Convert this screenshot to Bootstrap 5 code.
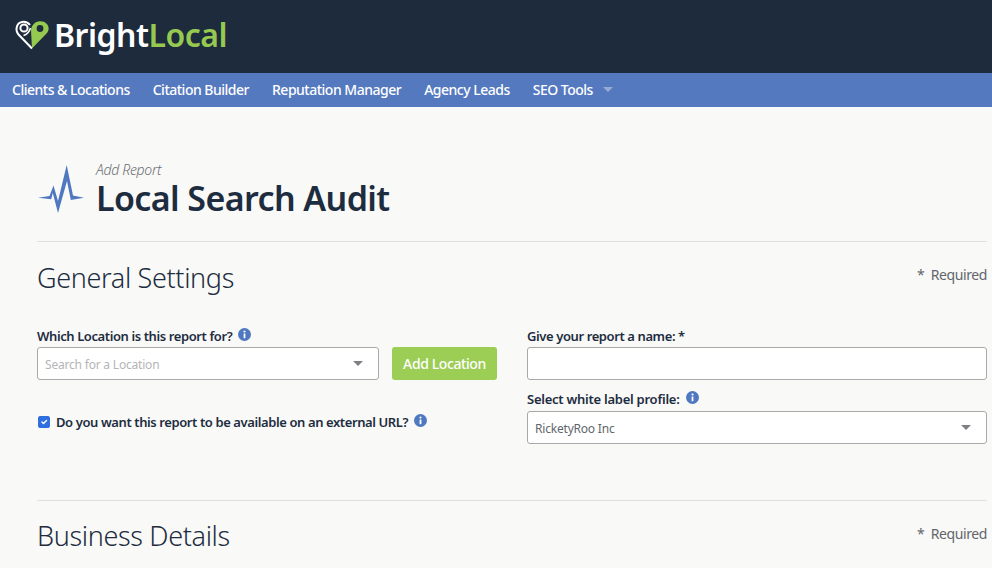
<!DOCTYPE html>
<html lang="en">
<head>
<meta charset="utf-8">
<title>Local Search Audit</title>
<link href="https://cdn.jsdelivr.net/npm/bootstrap@5.3.0/dist/css/bootstrap.min.css" rel="stylesheet">
<style>
html,body{height:568px;overflow:hidden}
body{background:#f9f9f8;color:#1d2d3f;font-family:"Noto Sans","Open Sans",sans-serif}
.top-bar{height:73px;background:#1d2b3d;padding:0 14px}
.logo-text{font-size:32px;font-weight:600;letter-spacing:-.5px;color:#fff;line-height:1;margin-left:4px;margin-top:-4px}
.logo-text span{color:#96c950}
.main-menu{height:34px;background:#5479bf;padding:0 12px 2px;gap:23px}
.main-menu a{color:#fff;font-size:14px;font-weight:500;text-decoration:none;letter-spacing:-.5px;white-space:nowrap}
.menu-caret{width:0;height:0;border:5px solid transparent;border-top:5px solid #95abd6;border-bottom:0;margin-left:10px}
.content-area{padding:55px 5px 0 37px}
.head-icon{width:47px;height:48px;margin-top:3px;flex:none}
.head-block{margin-left:12px}
.eyebrow{font-size:14px;font-style:italic;font-weight:300;color:#6c6f73;line-height:16px;letter-spacing:-.3px}
.page-title{font-size:34px;font-weight:600;color:#1d2d3f;line-height:38px;margin:1px 0 0;letter-spacing:-.6px}
.sep{border-top:1px solid #e0e0df;opacity:1;margin:0}
.sep-one{margin-top:24px}
.sec-head{height:85px;padding-top:19px}
.sec-title{font-size:27px;font-weight:300;line-height:34px;color:#1d2d3f;margin:0;letter-spacing:-.35px}
.req{font-size:14px;color:#62666b;margin-top:3px;letter-spacing:-.4px}
.form-grid{--bs-gutter-x:30px}
.fld-label{font-size:13px;font-weight:600;color:#1d2d3f;line-height:18px;letter-spacing:-.4px;margin:0 0 2px;height:18px;display:flex;align-items:center;white-space:nowrap}
.info-i{width:13px;height:13px;margin-left:6px;margin-top:-4px;flex:none}
.fake-select{height:33px;background:#fff;border:1px solid #a9a9a9;border-radius:3px;padding:3px 15px 0 7px;font-size:12px;letter-spacing:-.2px}
.fake-select .ph{color:#b4b5b6}
.fake-select .val{color:#62666b}
.sel-caret{width:0;height:0;border:5px solid transparent;border-top:5px solid #7d7f82;border-bottom:0;margin-left:auto;margin-top:-3px}
.add-btn{background:#9ccd55;color:#fff;border:0;border-radius:3px;font-size:14px;font-weight:500;letter-spacing:-.4px;height:33px;width:105px;padding:0;margin-left:13px;flex:none}
.name-input{height:33px;background:#fff;border:1px solid #a9a9a9;border-radius:3px;padding:0 7px;display:block;width:100%}
.ext-row{margin-top:33px;height:18px}
.ext-check.form-check-input{width:12px;height:12px;margin:0 6px 0 1px;border-radius:2px;flex:none;background-color:#2f6fe0;border-color:#2f6fe0}
.ext-row .fld-label{margin:0}
.ext-row .info-i{margin-top:-3px}
.second-label{margin-top:10px;margin-bottom:3px;letter-spacing:-.25px}
.sep-two{margin-top:56px}
.sec-two{padding-top:18px}
.sec-two .req{margin-top:4px}
</style>
</head>
<body>
<header class="top-bar d-flex align-items-center">
<svg width="36" height="34" viewBox="0 0 36 34" aria-hidden="true">
<path d="M18 28.500 L4.500 14.500 C.8 10 2.500 3 8 2 C11 1.500 14 2.500 16 5" fill="none" stroke="#fff" stroke-width="2"/>
<path d="M18 28.500 L33 13 C37 7.500 33 1 26 1.200 C21 1.500 17.500 5 17 10 Z" fill="#96c950"/>
<circle cx="10" cy="8" r="3.600" fill="none" stroke="#fff" stroke-width="2"/>
<path d="M9.500 15.500 C13 14.500 15.500 11.500 16.500 8" fill="none" stroke="#fff" stroke-width="1.500"/>
<circle cx="26" cy="8.500" r="3.400" fill="#1d2b3d"/>
</svg>
<div class="logo-text">Bright<span>Local</span></div>
</header>
<nav class="main-menu d-flex align-items-center">
<a href="#">Clients &amp; Locations</a>
<a href="#">Citation Builder</a>
<a href="#">Reputation Manager</a>
<a href="#">Agency Leads</a>
<a href="#" class="d-flex align-items-center">SEO Tools<span class="menu-caret"></span></a>
</nav>
<main class="content-area">
<div class="d-flex">
<svg class="head-icon" viewBox="0 0 47 48" aria-hidden="true">
<path d="M1 32.700 L12.500 31 L16.500 20.500 L21 36 L29.700 0 L36 30.500 L47 32.700 L33.800 35 L30 16 L21 48 L15.800 28 L14.200 34.200 Z" fill="#4f78c0"/>
</svg>
<div class="head-block">
<div class="eyebrow">Add Report</div>
<h1 class="page-title">Local Search Audit</h1>
</div>
</div>
<hr class="sep sep-one">
<div class="sec-head d-flex justify-content-between">
<h2 class="sec-title">General Settings</h2>
<div class="req">*&nbsp; Required</div>
</div>
<div class="row form-grid">
<div class="col-6">
<div class="fld-label">Which Location is this report for?
<svg class="info-i" viewBox="0 0 13 13"><circle cx="6.500" cy="6.500" r="6.500" fill="#4f78c0"/><rect x="5.600" y="5.500" width="1.800" height="4.700" fill="#fff"/><circle cx="6.500" cy="3.500" r="1.100" fill="#fff"/></svg>
</div>
<div class="d-flex">
<div class="fake-select flex-grow-1 d-flex align-items-center"><span class="ph">Search for a Location</span><span class="sel-caret"></span></div>
<button type="button" class="btn add-btn">Add Location</button>
</div>
<div class="ext-row d-flex align-items-center">
<input class="form-check-input ext-check" type="checkbox" checked aria-label="External URL">
<div class="fld-label">Do you want this report to be available on an external URL?
<svg class="info-i" viewBox="0 0 13 13"><circle cx="6.500" cy="6.500" r="6.500" fill="#4f78c0"/><rect x="5.600" y="5.500" width="1.800" height="4.700" fill="#fff"/><circle cx="6.500" cy="3.500" r="1.100" fill="#fff"/></svg>
</div>
</div>
</div>
<div class="col-6">
<div class="fld-label">Give your report a name: *</div>
<input class="name-input" type="text" aria-label="Report name">
<div class="fld-label second-label">Select white label profile:
<svg class="info-i" viewBox="0 0 13 13"><circle cx="6.500" cy="6.500" r="6.500" fill="#4f78c0"/><rect x="5.600" y="5.500" width="1.800" height="4.700" fill="#fff"/><circle cx="6.500" cy="3.500" r="1.100" fill="#fff"/></svg>
</div>
<div class="fake-select d-flex align-items-center"><span class="val">RicketyRoo Inc</span><span class="sel-caret"></span></div>
</div>
</div>
<hr class="sep sep-two">
<div class="sec-head sec-two d-flex justify-content-between">
<h2 class="sec-title">Business Details</h2>
<div class="req">*&nbsp; Required</div>
</div>
</main>
<script src="https://cdn.jsdelivr.net/npm/bootstrap@5.3.0/dist/js/bootstrap.bundle.min.js"></script>
</body>
</html>
